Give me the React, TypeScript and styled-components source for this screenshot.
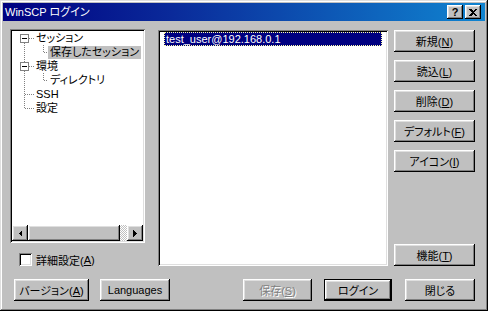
import React from 'react';
import styled, {createGlobalStyle, css} from 'styled-components';

const GlobalStyle = createGlobalStyle`
  html, body {
    margin: 0;
    padding: 0;
    background: #c0c0c0;
  }
  body {
    font-family: "Liberation Sans", "Noto Sans CJK JP", sans-serif;
    font-size: 11px;
    font-feature-settings: "palt";
  }
  * {
    box-sizing: border-box;
  }
`

const raised = css`
  background: #c0c0c0;
  box-shadow: inset -1px -1px #000, inset 1px 1px #fff, inset -2px -2px #808080, inset 2px 2px #dfdfdf;
`

const sunken = css`
  box-shadow: inset 1px 1px #808080, inset -1px -1px #fff, inset 2px 2px #000, inset -2px -2px #dfdfdf;
`

const Window = styled.div`
  width: 488px;
  height: 311px;
  padding: 3px;
  display: flex;
  flex-direction: column;
  background: #c0c0c0;
  box-shadow: inset -1px -1px #000, inset 1px 1px #dfdfdf, inset -2px -2px #808080, inset 2px 2px #fff;
`

const TitleBar = styled.div`
  height: 18px;
  display: flex;
  align-items: center;
  padding: 0 4px 0 2px;
  background: linear-gradient(90deg, #000080 0%, #0a2a9a 35%, #1084d0 100%);
`

const Title = styled.div`
  flex: 1;
  color: #fff;
  font-size: 11px;
  line-height: 18px;
  white-space: nowrap;
`

const TitleButton = styled.div<{$gap?: number}>`
  ${raised};
  width: 16px;
  height: 14px;
  margin-left: ${p => p.$gap || 0}px;
  display: flex;
  align-items: center;
  justify-content: center;
  font-weight: bold;
  font-size: 11px;
  line-height: 14px;
  color: #000;
`

const Body = styled.div`
  flex: 1;
  display: flex;
  flex-direction: column;
  padding: 8px 10px 0 7px;
`

const Main = styled.div`
  display: flex;
  height: 237px;
`

const LeftCol = styled.div`
  width: 135px;
  display: flex;
  flex-direction: column;
`

const TreePanel = styled.div`
  ${sunken};
  height: 216px;
  padding: 2px;
  background: #fff;
  display: flex;
  flex-direction: column;
`

const TreeList = styled.div`
  flex: 1;
`

const TreeRowEl = styled.div`
  display: flex;
  align-items: center;
  height: 14px;
`

const Label = styled.span<{$selected?: boolean}>`
  height: 13px;
  line-height: 13px;
  padding: 0 2px;
  white-space: nowrap;
  color: #000;
  background: ${p => p.$selected ? '#c0c0c0' : 'transparent'};
`

const HScroll = styled.div`
  display: flex;
  height: 16px;
`

const ScrollButton = styled.div`
  ${raised};
  width: 16px;
  height: 16px;
  display: flex;
  align-items: center;
  justify-content: center;
`

const Thumb = styled.div`
  ${raised};
  flex: 1;
`

const Track = styled.div`
  width: 7px;
  background: repeating-conic-gradient(#c0c0c0 0 25%, #fff 0 50%) 0 0 / 2px 2px;
`

const CheckRow = styled.div`
  display: flex;
  align-items: center;
  margin: 10px 0 0 9px;
  height: 13px;
`

const CheckBox = styled.div`
  ${sunken};
  width: 13px;
  height: 13px;
  background: #fff;
  margin-right: 4px;
`

const ListBox = styled.div`
  ${sunken};
  width: 230px;
  height: 236px;
  margin: 1px 0 0 13px;
  padding: 2px 6px;
  background: #fff;
`

const ListItem = styled.div<{$selected?: boolean}>`
  height: 14px;
  line-height: 14px;
  padding-left: 2px;
  color: ${p => p.$selected ? '#fff' : '#000'};
  background: ${p => p.$selected ? '#000080' : 'transparent'};
  outline: ${p => p.$selected ? '1px dotted #ffffa8' : 'none'};
  outline-offset: -1px;
`

const SideButtons = styled.div`
  width: 81px;
  margin: 1px 0 0 6px;
  display: flex;
  flex-direction: column;
  gap: 8px;
`

const BottomRow = styled.div`
  display: flex;
  align-items: center;
  margin-top: 13px;
  height: 22px;
  padding-left: 4px;
`

const Spacer = styled.div`
  flex: 1;
`

const Button = styled.button<{$w?: number; $default?: boolean; $ml?: number; $push?: boolean}>`
  ${raised};
  width: ${p => p.$w ? p.$w + 'px' : '100%'};
  height: 22px;
  flex-shrink: 0;
  margin: 0 0 0 ${p => p.$ml || 0}px;
  ${p => p.$push && css`margin-top: auto;`}
  padding: 0;
  border: none;
  font: inherit;
  font-feature-settings: "palt";
  color: #000;
  white-space: nowrap;
  ${p => p.$default && css`
    box-shadow: inset 0 0 0 1px #000, inset -2px -2px #000, inset 2px 2px #fff, inset -3px -3px #808080, inset 3px 3px #dfdfdf;
  `}
  &:disabled {
    color: #808080;
    text-shadow: 1px 1px #fff;
  }
`

type TreeNode = {
    label: string
    level: number
    box?: boolean
    up?: boolean
    down?: boolean
    last?: boolean
    selected?: boolean
}

const tree: TreeNode[] = [
    {label: 'セッション', level: 0, box: true, down: true},
    {label: '保存したセッション', level: 1, last: true, selected: true},
    {label: '環境', level: 0, box: true, up: true, down: true},
    {label: 'ディレクトリ', level: 1, last: true},
    {label: 'SSH', level: 0, up: true, down: true},
    {label: '設定', level: 0, up: true},
]

const dot = {stroke: '#808080', strokeWidth: 1, strokeDasharray: '1 1'}

const Connector = ({node}: {node: TreeNode}) => {
    const w = node.level === 0 ? 22 : 36
    return (
        <svg width={w} height={14} shapeRendering="crispEdges" style={{flexShrink: 0}}>
            {node.level === 0 ? (
                <>
                    {node.up && <line x1={12.5} y1={0} x2={12.5} y2={node.box ? 3 : 7} {...dot}/>}
                    {node.down && <line x1={12.5} y1={node.box ? 12 : 8} x2={12.5} y2={14} {...dot}/>}
                    <line x1={node.box ? 17 : 13} y1={7.5} x2={22} y2={7.5} {...dot}/>
                    {node.box && (
                        <>
                            <rect x={8.5} y={3.5} width={8} height={8} fill="#fff" stroke="#808080"/>
                            <line x1={10} y1={7.5} x2={15} y2={7.5} stroke="#000"/>
                        </>
                    )}
                </>
            ) : (
                <>
                    <line x1={12.5} y1={0} x2={12.5} y2={14} {...dot}/>
                    <line x1={31.5} y1={0} x2={31.5} y2={node.last ? 8 : 14} {...dot}/>
                    <line x1={32} y1={7.5} x2={36} y2={7.5} {...dot}/>
                </>
            )}
        </svg>
    )
}

const Arrow = ({dir}: {dir: 'left' | 'right'}) => (
    <svg width={4} height={7} shapeRendering="crispEdges">
        <polygon points={dir === 'left' ? '4,0 4,7 0.5,3.5' : '0,0 0,7 3.5,3.5'} fill="#000"/>
    </svg>
)

const Mn = ({children}: {children: string}) => <>(<u>{children}</u>)</>

const App = () => {
    return (
        <>
            <GlobalStyle/>
            <Window>
                <TitleBar>
                    <Title>WinSCP ログイン</Title>
                    <TitleButton>?</TitleButton>
                    <TitleButton $gap={2}>
                        <svg width={8} height={7} shapeRendering="crispEdges">
                            <path d="M0 0h2l2 2 2-2h2v1l-3 2.5 3 2.5v1h-2l-2-2-2 2h-2v-1l3-2.5-3-2.5z" fill="#000"/>
                        </svg>
                    </TitleButton>
                </TitleBar>
                <Body>
                    <Main>
                        <LeftCol>
                            <TreePanel>
                                <TreeList>
                                    {tree.map(n => (
                                        <TreeRowEl key={n.label}>
                                            <Connector node={n}/>
                                            <Label $selected={n.selected}>{n.label}</Label>
                                        </TreeRowEl>
                                    ))}
                                </TreeList>
                                <HScroll>
                                    <ScrollButton><Arrow dir="left"/></ScrollButton>
                                    <Thumb/>
                                    <Track/>
                                    <ScrollButton><Arrow dir="right"/></ScrollButton>
                                </HScroll>
                            </TreePanel>
                            <CheckRow>
                                <CheckBox/>
                                詳細設定<Mn>A</Mn>
                            </CheckRow>
                        </LeftCol>
                        <ListBox>
                            <ListItem $selected>test_user@192.168.0.1</ListItem>
                        </ListBox>
                        <SideButtons>
                            <Button>新規<Mn>N</Mn></Button>
                            <Button>読込<Mn>L</Mn></Button>
                            <Button>削除<Mn>D</Mn></Button>
                            <Button>デフォルト<Mn>F</Mn></Button>
                            <Button>アイコン<Mn>I</Mn></Button>
                            <Button $push>機能<Mn>T</Mn></Button>
                        </SideButtons>
                    </Main>
                    <BottomRow>
                        <Button $w={75}>バージョン<Mn>A</Mn></Button>
                        <Button $w={70} $ml={11}>Languages</Button>
                        <Spacer/>
                        <Button $w={69} disabled>保存<Mn>S</Mn></Button>
                        <Button $w={68} $ml={12} $default>ログイン</Button>
                        <Button $w={70} $ml={13}>閉じる</Button>
                    </BottomRow>
                </Body>
            </Window>
        </>
    );
};

export default App;
